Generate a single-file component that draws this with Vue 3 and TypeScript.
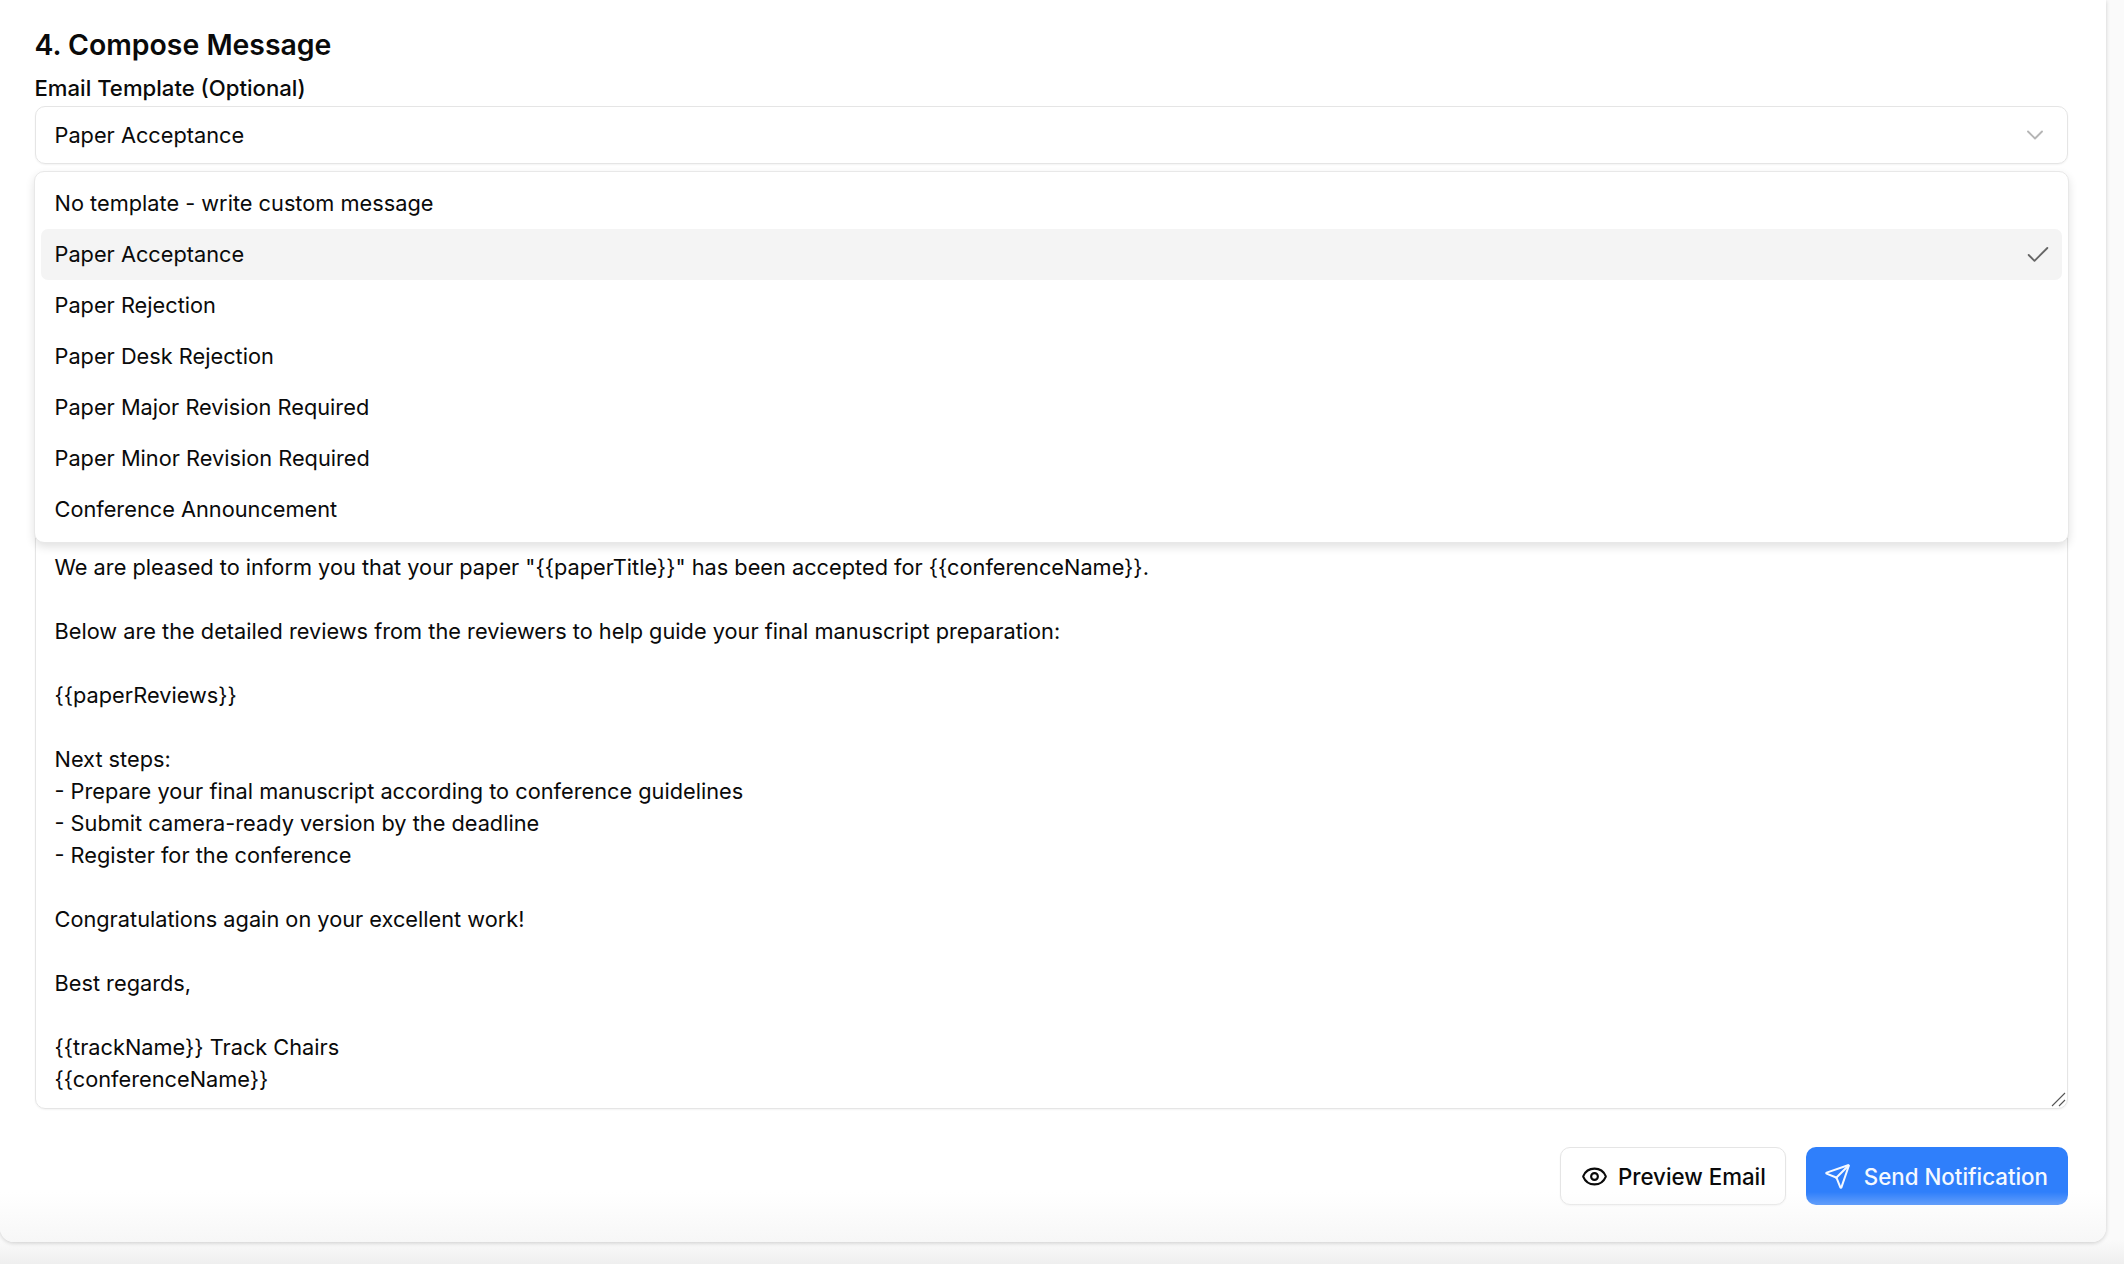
<script setup lang="ts">
const options: string[] = [
  'No template - write custom message',
  'Paper Acceptance',
  'Paper Rejection',
  'Paper Desk Rejection',
  'Paper Major Revision Required',
  'Paper Minor Revision Required',
  'Conference Announcement',
]
const selected = 'Paper Acceptance'
const body = `We are pleased to inform you that your paper "{{paperTitle}}" has been accepted for {{conferenceName}}.

Below are the detailed reviews from the reviewers to help guide your final manuscript preparation:

{{paperReviews}}

Next steps:
- Prepare your final manuscript according to conference guidelines
- Submit camera-ready version by the deadline
- Register for the conference

Congratulations again on your excellent work!

Best regards,

{{trackName}} Track Chairs
{{conferenceName}}`
</script>

<template>
  <div class="page">
    <section class="card">
      <h2 class="title">4. Compose Message</h2>
      <div class="field">
        <label class="label">Email Template (Optional)</label>
        <div class="select">
          <span>{{ selected }}</span>
          <svg class="chev" viewBox="0 0 24 24" fill="none" stroke="currentColor" stroke-width="1.6" stroke-linecap="round" stroke-linejoin="round"><path d="m6 9 6 6 6-6" /></svg>
        </div>
        <ul class="menu">
          <li v-for="o in options" :key="o" class="item" :class="{ active: o === selected }">
            <span>{{ o }}</span>
            <svg v-if="o === selected" class="check" viewBox="0 0 24 24" fill="none" stroke="currentColor" stroke-width="1.6" stroke-linecap="round" stroke-linejoin="round"><path d="M20 6 9 17l-5-5" /></svg>
          </li>
        </ul>
      </div>
      <div class="message">
        <div class="message-text">{{ body }}</div>
        <svg class="grip" viewBox="0 0 16 16" fill="none" stroke="#555" stroke-width="1.1"><path d="M2 15 15 2" /><path d="M9 15 15 9" /></svg>
      </div>
      <div class="actions">
        <button class="btn ghost" type="button">
          <svg viewBox="0 0 24 24" fill="none" stroke="currentColor" stroke-width="1.9" stroke-linecap="round" stroke-linejoin="round"><path d="M2.06 12.35a1 1 0 0 1 0-.7 10.75 10.75 0 0 1 19.88 0 1 1 0 0 1 0 .7 10.75 10.75 0 0 1-19.88 0" /><circle cx="12" cy="12" r="3" /></svg>
          Preview Email
        </button>
        <button class="btn primary" type="button">
          <svg viewBox="0 0 24 24" fill="none" stroke="currentColor" stroke-width="1.8" stroke-linecap="round" stroke-linejoin="round"><path d="M14.54 21.69a.5.5 0 0 0 .94-.03l6.5-19a.5.5 0 0 0-.64-.64l-19 6.5a.5.5 0 0 0-.03.94l7.93 3.18a2 2 0 0 1 1.11 1.11z" /><path d="m21.85 2.15-10.94 10.94" /></svg>
          Send Notification
        </button>
      </div>
      <div class="fade"></div>
    </section>
  </div>
</template>

<style>
html, body { margin: 0; background: #fafafa; }
</style>

<style scoped>
.page {
  height: 1264px;
  overflow: hidden;
  box-sizing: border-box;
  padding-right: 18px;
  background: linear-gradient(to bottom, #fafafa 0, #fafafa 1240px, #efefef 1264px);
  font-family: Inter, "Liberation Sans", sans-serif;
  color: #0a0a0a;
}
.card {
  position: relative;
  height: 1242px;
  box-sizing: border-box;
  padding: 28px 38px 0 34.5px;
  background: #fff;
  border-radius: 0 0 14px 14px;
  box-shadow: 0 1px 4px rgba(0, 0, 0, 0.18);
  display: flex;
  flex-direction: column;
}
.title {
  margin: 0;
  font-size: 28.4px;
  line-height: 34px;
  font-weight: 600;
}
.field { position: relative; margin-top: 14px; }
.label {
  display: block;
  font-size: 22.15px;
  line-height: 24px;
  font-weight: 500;
  margin-bottom: 6px;
}
.select {
  height: 58px;
  box-sizing: border-box;
  border: 1px solid #e5e5e5;
  border-radius: 10px;
  padding: 0 18px 0 19px;
  display: flex;
  align-items: center;
  justify-content: space-between;
  font-size: 21.75px;
  box-shadow: 0 1px 2px rgba(0, 0, 0, 0.05);
}
.chev { width: 28px; height: 28px; color: #b5b5b5; }
.menu {
  position: absolute;
  z-index: 2;
  top: 95px;
  left: -0.5px;
  right: -1px;
  margin: 0;
  padding: 6px 6px 7px;
  list-style: none;
  background: #fff;
  border: 1px solid #e8e8e8;
  border-radius: 10px;
  box-shadow: 0 4px 10px rgba(0, 0, 0, 0.12);
}
.item {
  height: 51px;
  box-sizing: border-box;
  padding: 0 10px 1px 13.5px;
  display: flex;
  align-items: center;
  justify-content: space-between;
  font-size: 21.75px;
  border-radius: 7px;
}
.item.active { background: #f4f4f4; }
.check { width: 28px; height: 28px; color: #666; margin-top: 1px; }
.message {
  position: relative;
  flex: none;
  margin-top: 311px;
  height: 634px;
  box-sizing: border-box;
  padding: 75px 19px 0;
  border: 1px solid #e5e5e5;
  border-radius: 10px;
  box-shadow: 0 1px 2px rgba(0, 0, 0, 0.05);
  font-size: 21.75px;
  line-height: 32px;
  white-space: pre-wrap;
}
.grip {
  position: absolute;
  right: 1px;
  bottom: 1px;
  width: 16px;
  height: 16px;
}
.actions {
  margin-top: 38px;
  display: flex;
  justify-content: flex-end;
  gap: 20px;
}
.btn {
  height: 58px;
  box-sizing: border-box;
  border-radius: 10px;
  display: inline-flex;
  align-items: center;
  font-family: inherit;
  font-size: 22.3px;
  font-weight: 500;
}
.btn svg { width: 27px; height: 27px; flex: none; }
.ghost {
  gap: 10px;
  padding: 0 19px 0 20px;
  background: #fff;
  color: #0a0a0a;
  border: 1px solid #e5e5e5;
  box-shadow: 0 1px 2px rgba(0, 0, 0, 0.05);
}
.primary {
  gap: 13px;
  padding: 0 20px 0 18px;
  background: #2f7ffb;
  color: #f5f9ff;
  border: 0;
}
.fade {
  position: absolute;
  left: 0;
  right: 0;
  bottom: 0;
  height: 50px;
  border-radius: 0 0 14px 14px;
  background: linear-gradient(to bottom, rgba(247, 247, 247, 0), #f7f7f7);
  pointer-events: none;
}
</style>
